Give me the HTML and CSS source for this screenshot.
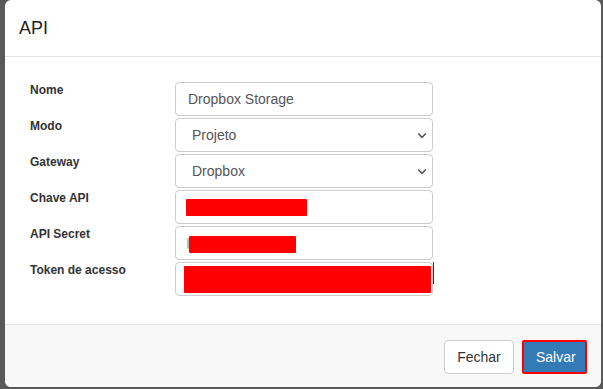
FILE: index.html
```html
<!DOCTYPE html>
<html lang="pt">
<head>
<meta charset="utf-8">
<title>API</title>
<link rel="stylesheet" href="styles.css">
</head>
<body>
<div class="modal">
  <div class="modal-header">
    <h4 class="modal-title">API</h4>
  </div>
  <div class="modal-body">
    <div class="form-row">
      <label class="label">Nome</label>
      <div class="field"><span class="value">Dropbox Storage</span></div>
    </div>
    <div class="form-row">
      <label class="label">Modo</label>
      <div class="field select"><span class="value">Projeto</span>
        <svg class="chev" width="10" height="7" viewBox="0 0 10 7"><path d="M1.2 1.5 L5 5.3 L8.8 1.5" fill="none" stroke="#555" stroke-width="1.6"/></svg>
      </div>
    </div>
    <div class="form-row">
      <label class="label">Gateway</label>
      <div class="field select"><span class="value">Dropbox</span>
        <svg class="chev" width="10" height="7" viewBox="0 0 10 7"><path d="M1.2 1.5 L5 5.3 L8.8 1.5" fill="none" stroke="#555" stroke-width="1.6"/></svg>
      </div>
    </div>
    <div class="form-row">
      <label class="label">Chave API</label>
      <div class="field"><span class="redact r1"></span></div>
    </div>
    <div class="form-row">
      <label class="label">API Secret</label>
      <div class="field"><span class="peek"></span><span class="redact r2"></span></div>
    </div>
    <div class="form-row">
      <label class="label">Token de acesso</label>
      <div class="field"><span class="redact r3"></span><span class="caret"></span></div>
    </div>
  </div>
  <div class="modal-footer">
    <button class="btn btn-default">Fechar</button>
    <button class="btn btn-primary">Salvar</button>
  </div>
</div>
</body>
</html>
```
FILE: styles.css
```css
html, body {
  margin: 0;
  padding: 0;
}
body {
  background: #595959;
  width: 603px;
  height: 389px;
  overflow: hidden;
  font-family: "Liberation Sans", Arial, sans-serif;
  color: #333;
}
.modal {
  margin-left: 5px;
  width: 596px;
  height: 387px;
  background: #fff;
  border-radius: 6px;
  overflow: hidden;
  display: flex;
  flex-direction: column;
}
.modal-header {
  padding: 15px 15px 0 14px;
  height: 41px;
  border-bottom: 1px solid #e5e5e5;
}
.modal-title {
  margin: 0;
  font-size: 18px;
  font-weight: 500;
  line-height: 26px;
  color: #222;
}
.modal-body {
  flex: 1;
  padding: 25px 0 0 25px;
  display: flex;
  flex-direction: column;
  gap: 2px;
}
.form-row {
  display: grid;
  grid-template-columns: 145px 258px;
  height: 34px;
}
.label {
  font-size: 12px;
  font-weight: bold;
  line-height: 16px;
  color: #333;
}
.field {
  position: relative;
  box-sizing: border-box;
  height: 34px;
  border: 1px solid #ccc;
  border-radius: 4px;
  padding: 0 12px;
  display: flex;
  align-items: center;
  font-size: 14px;
  color: #555;
}
.field.select {
  padding-left: 16px;
  justify-content: space-between;
  padding-right: 5px;
}
.chev {
  display: block;
}
.value {
  line-height: 20px;
}
.redact {
  position: absolute;
  background: #ff0000;
  border-radius: 1px;
}
.r1 { left: 10px; top: 8px; width: 121px; height: 17px; }
.r2 { left: 13px; top: 9px; width: 107px; height: 17px; }
.r3 { left: 8px; top: 3px; width: 247px; height: 27px; }
.peek {
  position: absolute;
  left: 11px;
  top: 11px;
  width: 3px;
  height: 11px;
  background: #bbb;
  border-radius: 2px;
}
.caret {
  position: absolute;
  right: -2px;
  top: -1px;
  width: 1px;
  height: 22px;
  background: #333;
}
.modal-footer {
  height: 63px;
  box-sizing: border-box;
  border-top: 1px solid #e5e5e5;
  background: #f8f8f8;
  padding: 15px 14px 15px 0;
  display: flex;
  justify-content: flex-end;
  gap: 8px;
}
.btn {
  box-sizing: border-box;
  height: 34px;
  font-family: "Liberation Sans", Arial, sans-serif;
  font-size: 14px;
  border-radius: 4px;
  padding: 0 12px;
  cursor: pointer;
}
.btn-default {
  width: 70px;
  background: #fff;
  border: 1px solid #ccc;
  color: #333;
}
.btn-primary {
  width: 65px;
  background: #337ab7;
  border: 2px solid #ff0000;
  border-radius: 2px;
  color: #fff;
}
```
